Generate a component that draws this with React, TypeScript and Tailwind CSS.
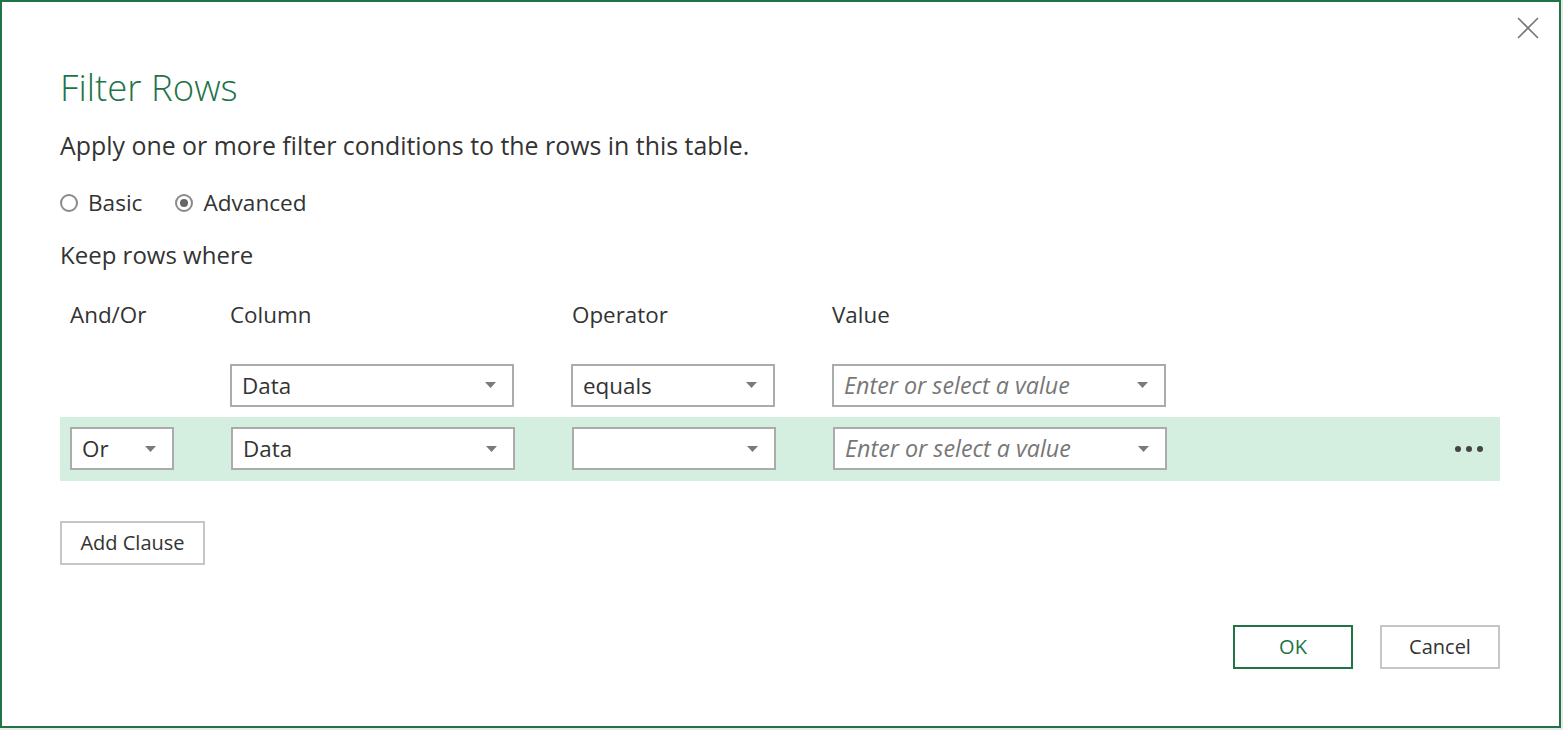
import React from 'react'

const font = { fontFamily: '"Open Sans", "Noto Sans", sans-serif' }

function Caret() {
  return (
    <svg width="11" height="6" viewBox="0 0 11 6" className="shrink-0">
      <path d="M0 0 L11 0 L5.5 6 Z" fill="#7a7a7a" />
    </svg>
  )
}

function Select({ w, value, placeholder }: { w: string; value?: string; placeholder?: string }) {
  return (
    <div className={`${w} h-[43px] bg-white border-2 border-[#ababab] flex items-center justify-between pl-[10px] pr-[16px]`}>
      {value ? (
        <span className="text-[22.4px] text-[#333]">{value}</span>
      ) : placeholder ? (
        <span className="text-[23.3px] italic text-[#777]">{placeholder}</span>
      ) : (
        <span />
      )}
      <Caret />
    </div>
  )
}

function Radio({ checked, label }: { checked?: boolean; label: string }) {
  return (
    <label className="flex items-center gap-[10px]">
      <span className="w-[18px] h-[18px] rounded-full border-2 border-[#8a8a8a] bg-white flex items-center justify-center">
        {checked && <span className="w-[8px] h-[8px] rounded-full bg-[#666]" />}
      </span>
      <span className="text-[22.6px] text-[#333]">{label}</span>
    </label>
  )
}

export default function App() {
  return (
    <div className="w-[1563px] h-[730px] bg-[#e9e9e9] overflow-hidden" style={font}>
      <div className="relative w-[1561px] h-[728px] bg-white border-2 border-[#217346] pl-[58px] pr-[59px]">
        {/* close */}
        <button className="absolute right-[19px] top-[14px] w-[24px] h-[24px] flex items-center justify-center">
          <svg width="22" height="22" viewBox="0 0 22 22">
            <path d="M1 1 L21 21 M21 1 L1 21" stroke="#777" strokeWidth="1.6" />
          </svg>
        </button>

        <h1 className="mt-[62px] text-[36.6px] font-light text-[#217346] leading-[46px]">Filter Rows</h1>
        <p className="mt-[20px] text-[24.9px] text-[#333] leading-[30px]">
          Apply one or more filter conditions to the rows in this table.
        </p>

        <div className="mt-[26px] flex items-center gap-[33px]">
          <Radio label="Basic" />
          <Radio checked label="Advanced" />
        </div>

        <p className="mt-[20px] text-[24px] text-[#333] leading-[30px]">Keep rows where</p>

        <div className="mt-[30px] flex items-center pl-[10px] h-[30px] text-[22.4px] text-[#333]">
          <span className="w-[160px]">And/Or</span>
          <span className="w-[342px]">Column</span>
          <span className="w-[260px]">Operator</span>
          <span>Value</span>
        </div>

        <div className="mt-[34px] flex items-center pl-[170px] gap-[57px]">
          <Select w="w-[284px]" value="Data" />
          <Select w="w-[204px]" value="equals" />
          <Select w="w-[334px]" placeholder="Enter or select a value" />
        </div>

        <div className="mt-[10px] h-[64px] bg-[#d4efe0] flex items-center pl-[10px] pr-[17px]">
          <Select w="w-[104px]" value="Or" />
          <div className="ml-[57px] flex items-center gap-[57px]">
            <Select w="w-[284px]" value="Data" />
            <Select w="w-[204px]" />
            <Select w="w-[334px]" placeholder="Enter or select a value" />
          </div>
          <div className="ml-auto flex items-center gap-[5px]">
            <span className="w-[6px] h-[6px] rounded-full bg-[#444]" />
            <span className="w-[6px] h-[6px] rounded-full bg-[#444]" />
            <span className="w-[6px] h-[6px] rounded-full bg-[#444]" />
          </div>
        </div>

        <button className="mt-[40px] w-[145px] h-[44px] border-2 border-[#c6c6c6] bg-white text-[20px] text-[#333]">
          Add Clause
        </button>

        <div className="mt-[60px] flex justify-end gap-[27px]">
          <button className="w-[120px] h-[44px] border-2 border-[#217346] bg-white text-[20px] text-[#217346]">OK</button>
          <button className="w-[120px] h-[44px] border-2 border-[#c6c6c6] bg-white text-[20px] text-[#333]">Cancel</button>
        </div>
      </div>
    </div>
  )
}
